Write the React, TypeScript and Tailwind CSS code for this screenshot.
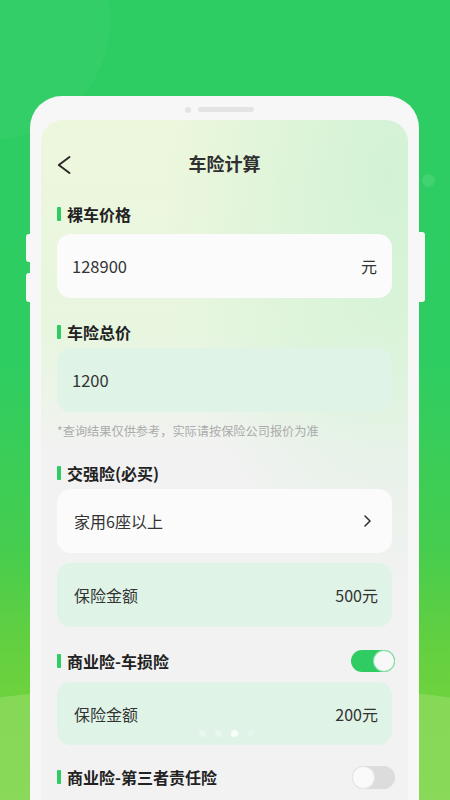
import React from "react";

const FONT = { fontFamily: '"Noto Sans CJK SC", "Noto Sans", sans-serif' };

function SectionTitle({ text, toggle }: { text: string; toggle?: "on" | "off" }) {
  return (
    <div className="flex h-[24px] items-center justify-between">
      <div className="flex items-center">
        <span className="block h-[14px] w-[4px] rounded-[1px] bg-[#2ecc63]" />
        <span className="ml-[6px] text-[16px] font-bold leading-[24px] text-[#222]">{text}</span>
      </div>
      {toggle === "on" && (
        <div className="mr-[-3px] flex h-[22px] w-[44px] items-center justify-end rounded-full bg-[#2ecc63] p-[1px]">
          <span className="block h-[20px] w-[20px] rounded-full bg-[#f8f8f8] shadow-[0_0_0_1px_#8fe0ad]" />
        </div>
      )}
      {toggle === "off" && (
        <div className="mr-[-3px] flex h-[23px] w-[43px] items-center justify-start rounded-full bg-[#dcdcdc] p-[1px]">
          <span className="block h-[21px] w-[21px] rounded-full bg-[#fafafa] shadow-[0_0_0_1px_#e6e6e6]" />
        </div>
      )}
    </div>
  );
}

export default function App() {
  return (
    <div
      className="relative h-[800px] w-[450px] overflow-hidden bg-[linear-gradient(180deg,#2dcd64_0%,#2ecd62_45%,#45cd4f_68%,#62cf41_80%,#6cd23e_86%)]"
      style={FONT}
    >
      {/* background decorations */}
      <div className="pointer-events-none absolute left-[-130px] top-[-100px] h-[240px] w-[240px] rounded-full bg-[#ffffff08]" />
      <div className="pointer-events-none absolute left-[-400px] top-[684px] h-[400px] w-[1250px] rounded-[50%] bg-[linear-gradient(180deg,#86d857_0%,#92dc60_100%)]" />
      <div className="pointer-events-none absolute left-[422px] top-[174px] h-[13px] w-[13px] rounded-full bg-[#ffffff1a]" />

      {/* phone frame */}
      <div className="relative ml-[30px] mt-[96px] h-[760px] w-[389px] rounded-t-[32px] bg-[#f7f7f7] px-[11px] pt-[9px]">
        {/* side buttons */}
        <span className="absolute left-[-4px] top-[138px] h-[28px] w-[5px] rounded-l-[3px] bg-[#f7f7f7]" />
        <span className="absolute left-[-4px] top-[177px] h-[29px] w-[5px] rounded-l-[3px] bg-[#f7f7f7]" />
        <span className="absolute right-[-6px] top-[136px] h-[70px] w-[7px] rounded-r-[3px] bg-[#f7f7f7]" />

        {/* notch */}
        <div className="flex h-[9px] items-center justify-center gap-[7px] pr-[10px]">
          <span className="block h-[6px] w-[6px] rounded-full bg-[#e4e4e4]" />
          <span className="block h-[5px] w-[56px] rounded-full bg-[#e4e4e4]" />
        </div>

        {/* screen */}
        <div className="relative mt-[6px] h-[720px] w-[367px] overflow-hidden rounded-t-[22px] bg-[radial-gradient(ellipse_at_95%_8%,#d2f2d6_0%,#dff5df00_45%),linear-gradient(180deg,#edf7dc_0%,#e8f6e0_30%,#eef4ea_40%,#f2f2f2_46%,#f2f2f2_100%)] px-[16px] pt-[21px]">
          {/* header */}
          <div className="relative flex h-[44px] items-center justify-center">
            <svg
              className="absolute left-[0px] top-[14px]"
              width="16"
              height="20"
              viewBox="0 0 16 20"
              fill="none"
            >
              <polyline points="12.5,2 1.8,10 12.5,18" stroke="#2b2b2b" strokeWidth="2" strokeLinecap="round" strokeLinejoin="round" />
            </svg>
            <span className="text-[18px] font-bold leading-[24px] text-[#2f2f2f]">车险计算</span>
          </div>

          <div className="mt-[17px]">
            <SectionTitle text="裸车价格" />
          </div>
          <div className="mt-[8px] flex h-[64px] items-center justify-between rounded-[14px] bg-[#fbfbfb] pl-[15px] pr-[15px]">
            <span className="text-[16.5px] text-[#333]">128900</span>
            <span className="text-[16px] text-[#333]">元</span>
          </div>

          <div className="mt-[22px]">
            <SectionTitle text="车险总价" />
          </div>
          <div className="mt-[4px] flex h-[64px] items-center rounded-[14px] bg-[#dff3e6] pl-[15px]">
            <span className="text-[16.5px] text-[#333]">1200</span>
          </div>

          <div className="mt-[10px] text-[12.2px] leading-[18px] text-[#ababab]">*查询结果仅供参考，实际请按保险公司报价为准</div>

          <div className="mt-[21px]">
            <SectionTitle text="交强险(必买)" />
          </div>
          <div className="mt-[4px] flex h-[64px] items-center justify-between rounded-[14px] bg-[#fbfbfb] pl-[17px] pr-[20px]">
            <span className="text-[16px] text-[#333]">家用6座以上</span>
            <svg width="10" height="14" viewBox="0 0 10 14" fill="none">
              <polyline points="3,2 8,7 3,12" stroke="#333" strokeWidth="1.6" strokeLinecap="round" strokeLinejoin="round" />
            </svg>
          </div>
          <div className="mt-[10px] flex h-[64px] items-center justify-between rounded-[14px] bg-[#dff3e6] pl-[17px] pr-[14px]">
            <span className="text-[16px] text-[#333]">保险金额</span>
            <span className="text-[16px] text-[#333]">500元</span>
          </div>

          <div className="mt-[22px]">
            <SectionTitle text="商业险-车损险" toggle="on" />
          </div>
          <div className="relative mt-[9px] flex h-[63px] items-center justify-between rounded-[14px] bg-[#dff3e6] pl-[17px] pr-[14px]">
            <span className="text-[16px] text-[#333]">保险金额</span>
            <span className="text-[16px] text-[#333]">200元</span>
            {/* carousel dots overlay */}
            <div className="absolute left-[142px] top-[48px] flex gap-[9px]">
              <span className="block h-[7px] w-[7px] rounded-full bg-[#ffffff55]" />
              <span className="block h-[7px] w-[7px] rounded-full bg-[#ffffff55]" />
              <span className="block h-[7px] w-[7px] rounded-full bg-[#ffffffd0]" />
              <span className="block h-[7px] w-[7px] rounded-full bg-[#ffffff40]" />
            </div>
          </div>

          <div className="mt-[20px]">
            <SectionTitle text="商业险-第三者责任险" toggle="off" />
          </div>
        </div>
      </div>
    </div>
  );
}
